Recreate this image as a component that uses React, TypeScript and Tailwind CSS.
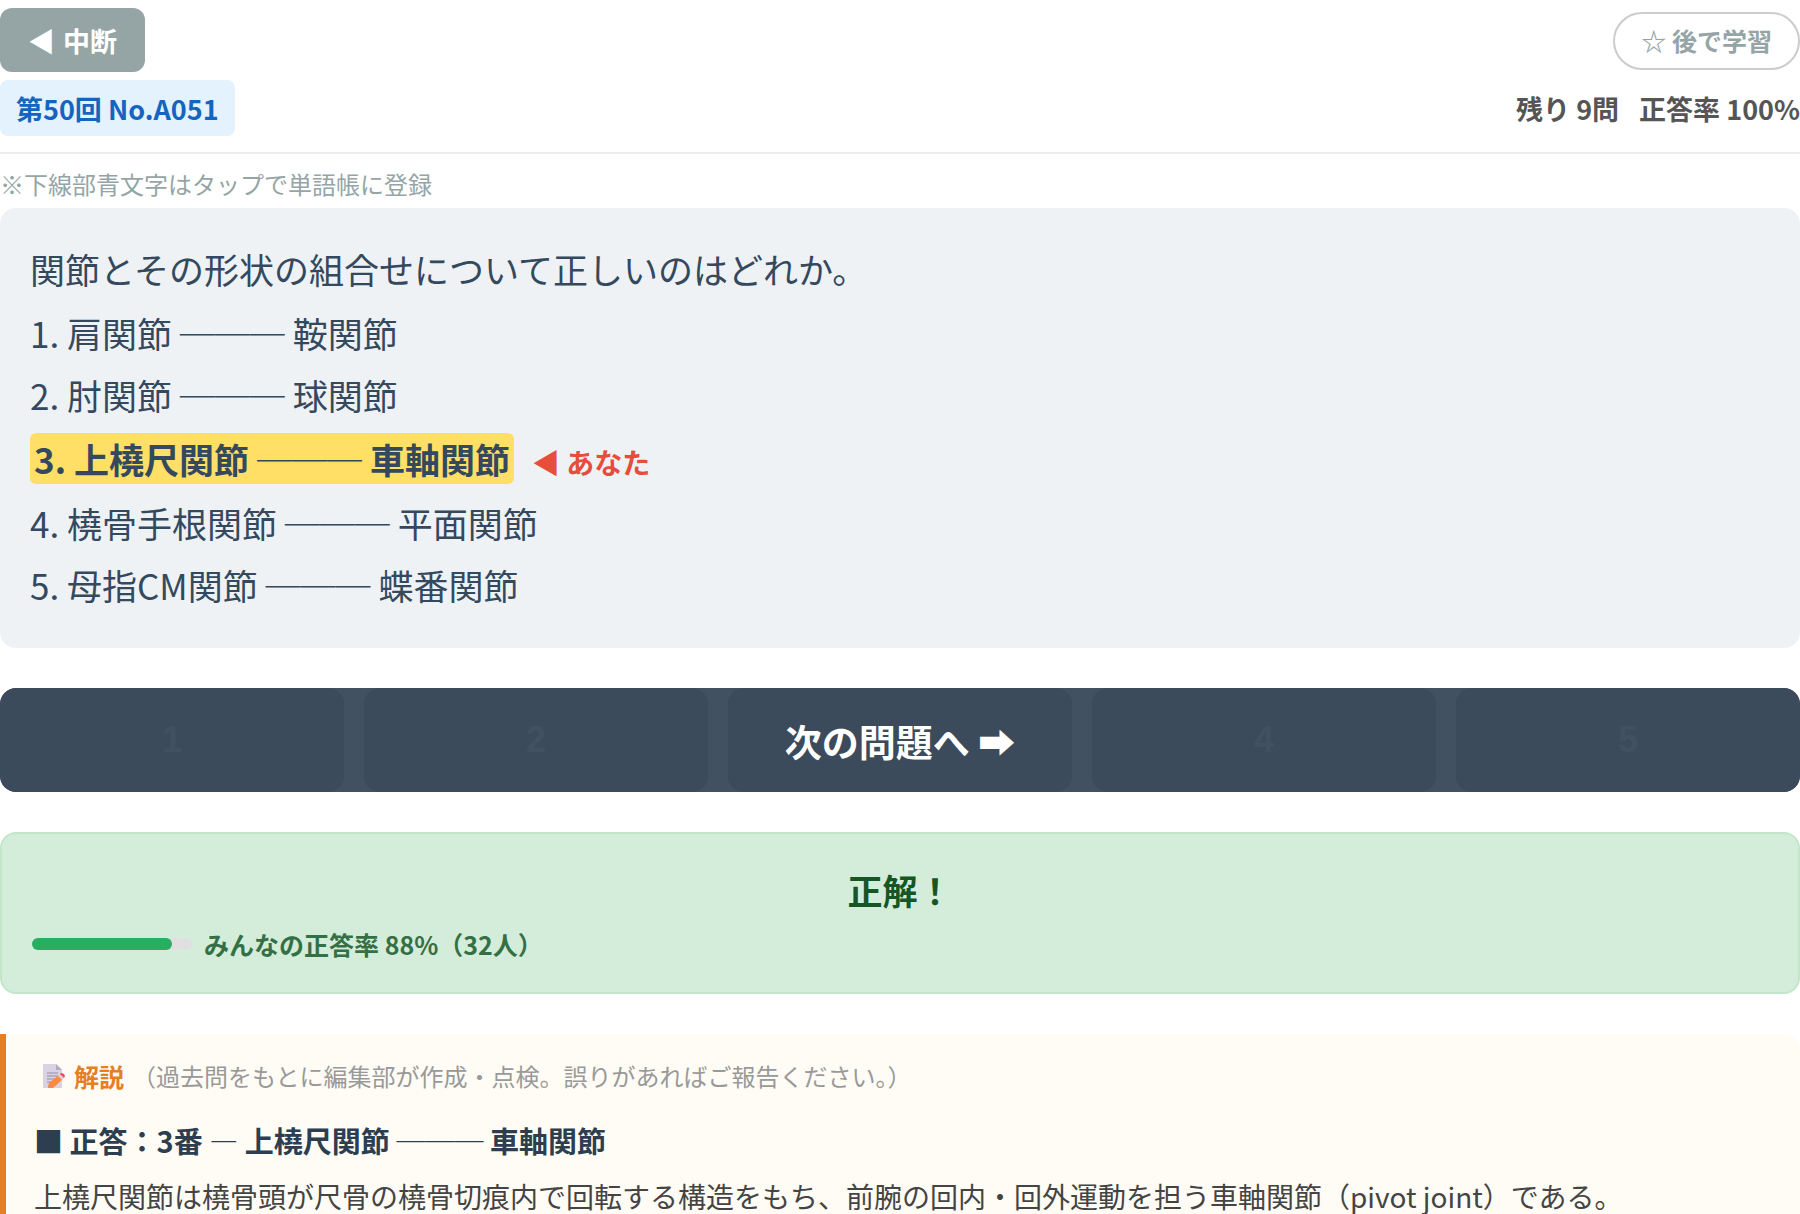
import { useState } from "react";

interface Choice {
  no: number;
  left: string;
  right: string;
}

const choices: Choice[] = [
  { no: 1, left: "肩関節", right: "鞍関節" },
  { no: 2, left: "肘関節", right: "球関節" },
  { no: 3, left: "上橈尺関節", right: "車軸関節" },
  { no: 4, left: "橈骨手根関節", right: "平面関節" },
  { no: 5, left: "母指CM関節", right: "蝶番関節" },
];

const answered = 3;
const everyone = { correct: 28, total: 32 };
const everyoneRate = (everyone.correct / everyone.total) * 100;

function MemoIcon() {
  return (
    <svg viewBox="0 0 24 26" className="w-6 h-[26px]" aria-hidden="true">
      <path d="M1 1h13l6 6v18H1z" fill="#d9d2e3" />
      <path d="M14 1l6 6h-6z" fill="#b3a9c0" />
      <path d="M5 10h11M5 13h11M5 16h8M5 19h5" stroke="#998da6" strokeWidth="1" />
      <path d="M6 25l1-5 10-8 4 4-10 9z" fill="#ff8a3c" />
      <path d="M6 25l1-5 4 5z" fill="#f08a5a" />
      <path d="M16 13l2-2 4 4-2 2z" fill="#d5cfe0" />
      <path d="M18 11l1-1q3 0 4 3l-1 2z" fill="#f0484f" />
    </svg>
  );
}

export default function App() {
  const [saved, setSaved] = useState(false);

  return (
    <div className="h-screen overflow-hidden bg-white pt-2 text-[#34495e] font-['Noto_Sans_CJK_JP',sans-serif]">
      {/* Header */}
      <header className="border-b-2 border-[#ecedee] pb-4">
        <div className="flex items-center justify-between">
          <button className="h-16 px-7 pt-0.5 flex items-center gap-2 rounded-xl bg-[#95a5a6] text-white text-[27px] font-bold">
            <span>◀</span>
            <span>中断</span>
          </button>
          <button
            className="mt-0.5 h-[58px] px-[26px] rounded-full border-2 border-[#cccccc] text-[#95a5a6] text-[25px] font-bold"
            aria-pressed={saved}
            onClick={() => setSaved(!saved)}
          >
            ☆ 後で学習
          </button>
        </div>
        <div className="mt-2 flex items-center justify-between text-[27px] font-bold">
          <span className="h-14 px-4 pt-0.5 flex items-center rounded-lg bg-[#e3f2fd] text-[#1565c0]">
            第50回 No.A051
          </span>
          <div className="flex gap-5 pt-0.5 text-[#555555]">
            <span>残り 9問</span>
            <span>正答率 100%</span>
          </div>
        </div>
      </header>

      <main>
        <p className="pt-[11px] pb-[5px] text-2xl leading-[38px] text-[#95a5a6]">
          ※下線部青文字はタップで単語帳に登録
        </p>

        {/* Question */}
        <section className="rounded-2xl bg-[#eef2f5] px-[30px] pt-[30px] pb-8 text-[35px] leading-[62px]">
          <p className="mb-0.5">関節とその形状の組合せについて正しいのはどれか。</p>
          <ul>
            {choices.map((c) =>
              c.no === answered ? (
                <li key={c.no} className="py-0.5">
                  <mark className="rounded-md bg-[#ffdf65] px-1 text-[#34495e] font-bold">
                    {c.no}. {c.left} ─── {c.right}
                  </mark>
                  <span className="ml-[18px] text-[28px] leading-none font-bold text-[#e74c3c]">
                    ◀ あなた
                  </span>
                </li>
              ) : (
                <li key={c.no}>
                  {c.no}. {c.left} ─── {c.right}
                </li>
              )
            )}
          </ul>
        </section>

        {/* Answer buttons, covered by the next button once answered */}
        <div className="relative mt-10 rounded-2xl overflow-hidden bg-[#425161]">
          <div className="grid grid-cols-5 gap-5">
            {choices.map((c) => (
              <button
                key={c.no}
                disabled
                aria-label={`${c.no}`}
                className="h-[104px] rounded-2xl bg-[#3c4b5b] text-[#425161] text-4xl font-bold font-['Liberation_Sans',sans-serif]"
              >
                {c.no !== answered && c.no}
              </button>
            ))}
          </div>
          <button className="absolute inset-0 pt-[3px] text-white text-[37px] font-bold">
            次の問題へ ➡
          </button>
        </div>

        {/* Result */}
        <section className="mt-10 rounded-2xl border-2 border-[#c3e6cb] bg-[#d4edda] px-[30px] pt-[26px] pb-[27px]">
          <h2 className="mb-[3px] text-center text-[35px] leading-[60px] font-bold text-[#155724]">
            正解！
          </h2>
          <div className="flex items-center gap-3 leading-[42px]">
            <div className="w-40 h-3 rounded-full bg-[#e0e0e0]">
              <div
                className="h-3 rounded-full bg-[#27ae60]"
                style={{ width: `${everyoneRate}%` }}
              />
            </div>
            <span className="text-[25px] font-bold text-[#347045]">
              みんなの正答率 {Math.round(everyoneRate)}%（{everyone.total}人）
            </span>
          </div>
        </section>

        {/* Explanation */}
        <section className="mt-10 rounded-r-2xl border-l-6 border-[#e67e22] bg-[#fffcf5] pl-7 pr-7 pt-[19px] pb-8">
          <div className="flex items-center gap-2 pl-2 text-[25px] leading-[46px]">
            <MemoIcon />
            <h3 className="font-bold text-[#e67e22]">解説</h3>
            <span className="text-2xl leading-[46px] text-[#999999]">
              （過去問をもとに編集部が作成・点検。誤りがあればご報告ください。）
            </span>
          </div>
          <h4 className="mt-4 text-[29px] leading-[50px] font-bold text-[#2c3e50]">
            ■ 正答：3番 ― 上橈尺関節 ─── 車軸関節
          </h4>
          <p className="mt-1.5 text-[28px] leading-[50px] text-[#444444]">
            上橈尺関節は橈骨頭が尺骨の橈骨切痕内で回転する構造をもち、前腕の回内・回外運動を担う車軸関節（pivot joint）である。
          </p>
        </section>
      </main>
    </div>
  );
}
